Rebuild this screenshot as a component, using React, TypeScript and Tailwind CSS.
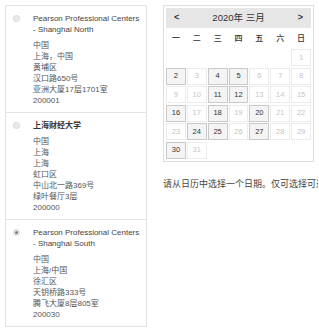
const centers = [
  {
    title: ["Pearson Professional Centers", "- Shanghai North"],
    bold: false,
    lines: ["中国", "上海，中国", "黄埔区", "汉口路650号", "亚洲大厦17层1701室", "200001"],
    selected: false,
  },
  {
    title: ["上海财经大学"],
    bold: true,
    lines: ["中国", "上海", "上海", "虹口区", "中山北一路369号", "绿叶餐厅3层", "200000"],
    selected: false,
  },
  {
    title: ["Pearson Professional Centers", "- Shanghai South"],
    bold: false,
    lines: ["中国", "上海/中国", "徐汇区", "天钥桥路333号", "腾飞大厦8层805室", "200030"],
    selected: true,
  },
];

const weekdays = ["一", "二", "三", "四", "五", "六", "日"];
const available = [2, 4, 5, 11, 12, 16, 18, 20, 24, 25, 27, 30];

function Radio({ checked }: { checked: boolean }) {
  return (
    <div className="mt-[2px] flex h-[7px] w-[7px] shrink-0 items-center justify-center rounded-full border border-[#d4d4d4] bg-[#ececec]">
      {checked && <div className="h-[3px] w-[3px] rounded-full bg-[#777]" />}
    </div>
  );
}

function Calendar() {
  // March 2020 starts on Sunday -> 6 empty cells first
  const cells: (number | null)[] = [...Array(6).fill(null)];
  for (let d = 1; d <= 31; d++) cells.push(d);

  return (
    <div className="w-[151px] border border-[#dedede] p-[2px]">
      <div className="flex h-[20px] items-center justify-between bg-[#e6e6e6] px-[8px] text-[9px] text-[#333]">
        <span className="font-bold">&lt;</span>
        <span className="text-[9.5px]">2020年 三月</span>
        <span className="font-bold">&gt;</span>
      </div>
      <div className="mt-[2px] grid grid-cols-7 gap-x-[1px]">
        {weekdays.map((w) => (
          <div key={w} className="flex h-[17px] items-center justify-center text-[8px] font-medium text-[#333]">
            {w}
          </div>
        ))}
      </div>
      <div className="mt-[2px] grid grid-cols-7 gap-x-[1px] gap-y-[1.5px]">
        {cells.map((d, i) =>
          d === null ? (
            <div key={i} className="h-[17px]" />
          ) : available.includes(d) ? (
            <div
              key={i}
              className="flex h-[17px] items-center justify-center border border-[#c9c9c9] bg-[#f4f4f4] text-[7.5px] text-[#333]"
            >
              {d}
            </div>
          ) : (
            <div
              key={i}
              className="flex h-[17px] items-center justify-center border border-[#ececec] text-[7.5px] text-[#c4c4c4]"
            >
              {d}
            </div>
          )
        )}
      </div>
    </div>
  );
}

export default function App() {
  return (
    <div
      className="h-[335px] w-[319px] overflow-hidden bg-white"
      style={{ fontFamily: '"Liberation Sans", "Noto Sans CJK SC", sans-serif' }}
    >
      <div className="flex items-start pl-[5px] pt-[5px]">
        <div className="w-[142px] shrink-0 border border-[#e3e3e3]">
          {centers.map((c, i) => (
            <div
              key={i}
              className={`flex gap-[13px] pb-[6px] pl-[7px] pt-[7px] ${i > 0 ? "border-t border-[#e3e3e3]" : ""}`}
            >
              <Radio checked={c.selected} />
              <div className="text-[8px] leading-[11px]">
                <div className={c.bold ? "font-bold text-[#333]" : "text-[#444]"}>
                  {c.title.map((t) => (
                    <div key={t}>{t}</div>
                  ))}
                </div>
                <div className="mt-[5px] text-[#555]">
                  {c.lines.map((l, j) => (
                    <div key={j}>{l}</div>
                  ))}
                </div>
              </div>
            </div>
          ))}
        </div>
        <div className="ml-[16px] min-w-0 shrink-0">
          <Calendar />
          <div className="mt-[16px] w-[155px] overflow-hidden whitespace-nowrap text-[9px] text-[#444]">
            请从日历中选择一个日期。仅可选择可选日期。
          </div>
        </div>
      </div>
    </div>
  );
}
